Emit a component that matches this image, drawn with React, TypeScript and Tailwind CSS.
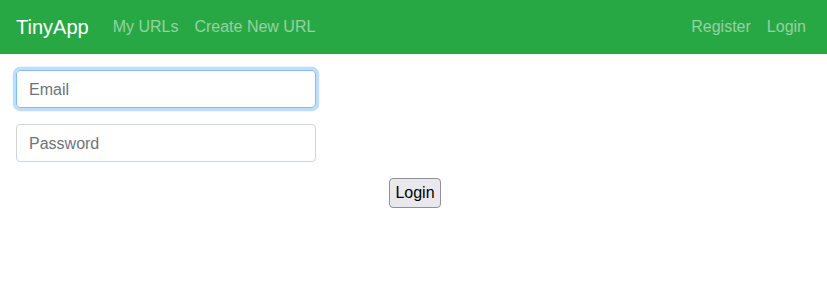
export default function App() {
  return (
    <div className="min-h-[288px] bg-white font-['Liberation_Sans',Arial,sans-serif] text-[16px] leading-6 text-[#212529]">
      {/* Navbar */}
      <nav className="flex h-[54px] items-center bg-[#28a745] pl-4 pr-[13px]">
        <a className="mr-4 text-[20px] leading-[30px] text-white" href="#">
          TinyApp
        </a>
        <div className="flex">
          <a className="px-2 text-white/50" href="#">My URLs</a>
          <a className="px-2 text-white/50" href="#">Create New URL</a>
        </div>
        <div className="ml-auto flex">
          <a className="px-2 text-white/50" href="#">Register</a>
          <a className="px-2 text-white/50" href="#">Login</a>
        </div>
      </nav>

      {/* Login form */}
      <form className="flex flex-col">
        <input
          autoFocus
          type="email"
          placeholder="Email"
          className="m-4 mb-0 h-[38px] w-[300px] rounded border border-[#80bdff] px-3 pt-[7px] pb-[5px] text-[#495057] shadow-[0_0_0_3.2px_rgba(0,123,255,0.25)] outline-none placeholder:text-[#6c757d]"
        />
        <input
          type="password"
          placeholder="Password"
          className="m-4 mb-0 h-[38px] w-[300px] rounded border border-[#ced4da] px-3 pt-[7px] pb-[5px] text-[#495057] outline-none placeholder:text-[#6c757d]"
        />
        <div className="mt-4 flex justify-center pl-[3px]">
          <button
            type="button"
            className="h-[30px] rounded border border-[#8f8f9d] bg-[#e9e9ed] px-[5px] text-[16px] leading-6 text-black"
          >
            Login
          </button>
        </div>
      </form>
    </div>
  );
}
